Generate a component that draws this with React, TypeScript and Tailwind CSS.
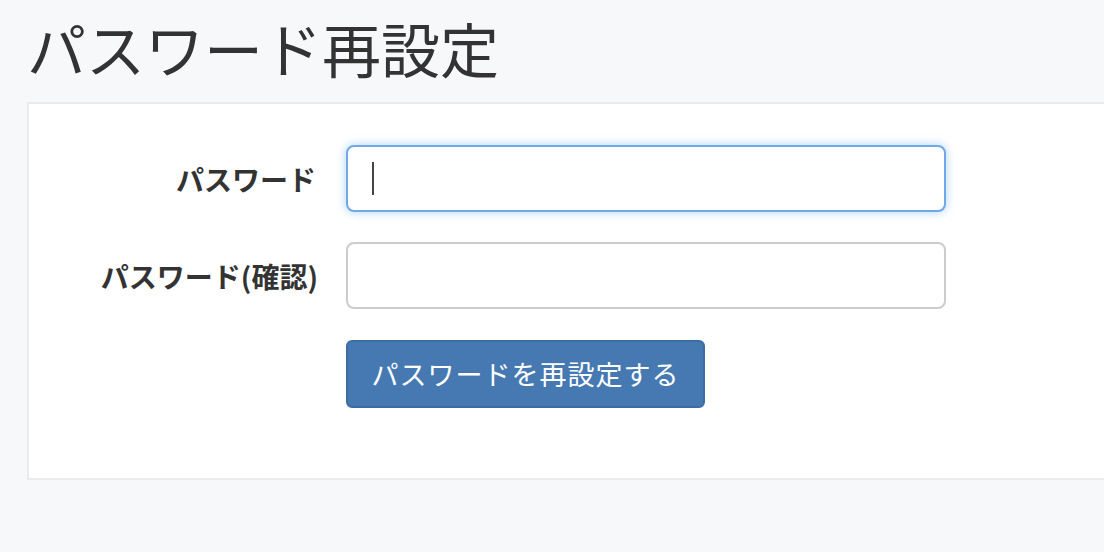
import React from 'react';

const FONT = '"Noto Sans CJK JP", "Noto Sans", sans-serif';

export default function App() {
  return (
    <div className="min-h-[552px] w-[1104px] overflow-hidden bg-[#f7f8fa] text-[#333]" style={{ fontFamily: FONT }}>
      {/* Title */}
      <h1 className="pl-[27px] pt-[10px] h-[102px] text-[59px] leading-[76px] font-normal whitespace-nowrap">
        パスワード再設定
      </h1>

      {/* Panel */}
      <div className="ml-[27px] w-[1100px] h-[378px] bg-white border-2 border-[#ebebeb] border-r-0 pt-[41px]">
        <form className="flex flex-col gap-[30px]">
          <div className="flex items-center">
            <label className="w-[317px] pr-[30px] text-right text-[28px] font-bold">パスワード</label>
            <div className="w-[600px] h-[67px] rounded-[8px] border-2 border-[#70a8e8] shadow-[0_0_10px_rgba(102,175,233,0.55)] bg-white flex items-center pl-[24px]">
              <span className="block w-[2px] h-[33px] bg-[#444]" />
            </div>
          </div>
          <div className="flex items-center">
            <label className="w-[317px] pr-[28px] text-right text-[28px] font-bold whitespace-nowrap">パスワード(確認)</label>
            <input
              type="password"
              className="w-[600px] h-[67px] rounded-[8px] border-2 border-[#cccccc] bg-white outline-none"
            />
          </div>
          <div className="flex pl-[317px] pt-[1px]">
            <button
              type="button"
              className="w-[359px] h-[68px] rounded-[6px] bg-[#4679b2] border-2 border-[#3d6ca3] text-white text-[27px] tracking-[1px]"
            >
              パスワードを再設定する
            </button>
          </div>
        </form>
      </div>
    </div>
  );
}
